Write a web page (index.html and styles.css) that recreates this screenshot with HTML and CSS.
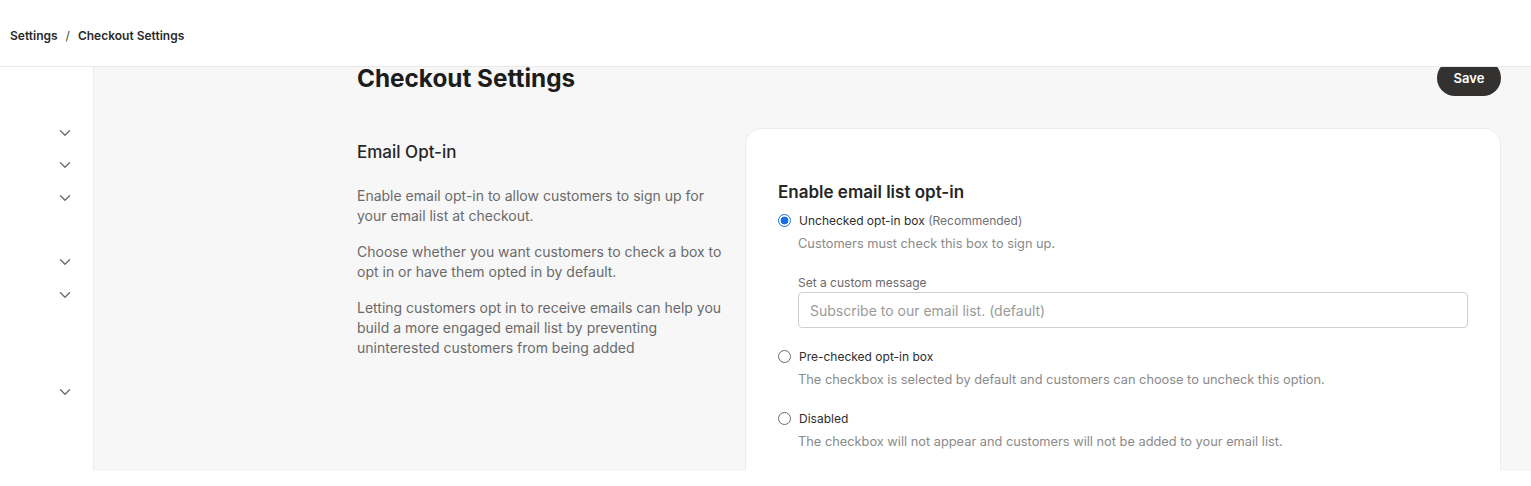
FILE: index.html
```html
<!DOCTYPE html>
<html lang="en">
<head>
<meta charset="utf-8">
<title>Checkout Settings</title>
<link rel="stylesheet" href="styles.css">
</head>
<body>
<div class="app">
  <header class="topbar">
    <nav class="crumbs">
      <span class="crumb">Settings</span>
      <span class="crumb-sep">/</span>
      <span class="crumb">Checkout Settings</span>
    </nav>
  </header>
  <div class="body">
    <aside class="sidebar">
      <ul class="side-list">
        <li class="side-item"><svg class="chev" viewBox="0 0 12 8"><path d="M1.5 1.8 6 6.2 10.5 1.8"/></svg></li>
        <li class="side-item"><svg class="chev" viewBox="0 0 12 8"><path d="M1.5 1.8 6 6.2 10.5 1.8"/></svg></li>
        <li class="side-item"><svg class="chev" viewBox="0 0 12 8"><path d="M1.5 1.8 6 6.2 10.5 1.8"/></svg></li>
        <li class="side-item"></li>
        <li class="side-item"><svg class="chev" viewBox="0 0 12 8"><path d="M1.5 1.8 6 6.2 10.5 1.8"/></svg></li>
        <li class="side-item"><svg class="chev" viewBox="0 0 12 8"><path d="M1.5 1.8 6 6.2 10.5 1.8"/></svg></li>
        <li class="side-item"></li>
        <li class="side-item"></li>
        <li class="side-item"><svg class="chev" viewBox="0 0 12 8"><path d="M1.5 1.8 6 6.2 10.5 1.8"/></svg></li>
      </ul>
    </aside>
    <main class="main">
      <div class="content">
        <div class="page-head">
          <h1 class="page-title">Checkout Settings</h1>
          <button class="save-btn" type="button">Save</button>
        </div>
        <div class="section">
          <div class="section-info">
            <h2 class="section-title">Email Opt-in</h2>
            <p class="section-text">Enable email opt-in to allow customers to sign up for your email list at checkout.</p>
            <p class="section-text">Choose whether you want customers to check a box to opt in or have them opted in by default.</p>
            <p class="section-text">Letting customers opt in to receive emails can help you build a more engaged email list by preventing uninterested customers from being added</p>
          </div>
          <div class="card">
            <h3 class="card-title">Enable email list opt-in</h3>
            <div class="option">
              <div class="option-row">
                <span class="radio radio-checked"></span>
                <span class="option-label">Unchecked opt-in box <span class="option-note">(Recommended)</span></span>
              </div>
              <p class="option-desc">Customers must check this box to sign up.</p>
              <div class="field">
                <label class="field-label">Set a custom message</label>
                <div class="field-input">Subscribe to our email list. (default)</div>
              </div>
            </div>
            <div class="option">
              <div class="option-row">
                <span class="radio"></span>
                <span class="option-label">Pre-checked opt-in box</span>
              </div>
              <p class="option-desc">The checkbox is selected by default and customers can choose to uncheck this option.</p>
            </div>
            <div class="option">
              <div class="option-row">
                <span class="radio"></span>
                <span class="option-label">Disabled</span>
              </div>
              <p class="option-desc">The checkbox will not appear and customers will not be added to your email list.</p>
            </div>
          </div>
        </div>
      </div>
    </main>
  </div>
</div>
</body>
</html>
```

FILE: styles.css
```css
* { box-sizing: border-box; }
html, body { margin: 0; padding: 0; background: #fff; }
body {
  font-family: Inter, "Noto Sans", "Liberation Sans", sans-serif;
  color: #222;
}
.app {
  height: 471px;
  display: flex;
  flex-direction: column;
  overflow: hidden;
}
.topbar {
  height: 67px;
  flex: none;
  display: flex;
  align-items: center;
  padding-left: 10px;
  border-bottom: 1px solid #e9e9e9;
  background: #fff;
  position: relative;
  z-index: 2;
}
.crumbs {
  display: flex;
  align-items: center;
  gap: 8px;
  font-size: 12px;
  font-weight: 600;
  color: #2a2a2a;
  padding-top: 5px;
}
.crumb-sep { font-weight: 400; color: #444; }
.body {
  flex: 1;
  display: flex;
  min-height: 0;
}
.sidebar {
  width: 94px;
  flex: none;
  background: #fff;
  border-right: 1px solid #ececec;
}
.side-list {
  list-style: none;
  margin: 0;
  padding: 50px 0 0 0;
}
.side-item {
  height: 32.3px;
  display: flex;
  align-items: center;
  justify-content: flex-end;
  padding-right: 22px;
}
.chev {
  width: 12px;
  height: 8px;
  fill: none;
  stroke: #6f6f6f;
  stroke-width: 1.4;
  stroke-linecap: round;
  stroke-linejoin: round;
}
.main {
  flex: 1;
  background: #f7f7f7;
}
.content {
  margin-top: -7px;
  padding: 0 30px 0 263px;
}
.page-head {
  height: 36px;
  display: flex;
  align-items: center;
  justify-content: space-between;
}
.page-title {
  margin: 0;
  padding-top: 1px;
  font-size: 24.3px;
  line-height: 29px;
  font-weight: 700;
  color: #1c1c1c;
}
.save-btn {
  height: 36px;
  width: 64px;
  border: none;
  border-radius: 18px;
  background: #333230;
  color: #fff;
  font-family: inherit;
  font-size: 13px;
  font-weight: 600;
  padding: 0;
}
.section {
  margin-top: 32px;
  display: grid;
  grid-template-columns: 366px 1fr;
  gap: 22px;
}
.section-info { padding-top: 12px; }
.section-title {
  margin: 0 0 22px 0;
  font-size: 17px;
  line-height: 24px;
  font-weight: 500;
  color: #262626;
}
.section-text {
  margin: 0 0 16px 0;
  font-size: 14px;
  line-height: 20px;
  color: #6a6a6a;
}
.card {
  background: #fff;
  border: 1px solid #ededed;
  border-radius: 16px;
  padding: 51px 32px 40px 32px;
  min-height: 400px;
}
.card-title {
  margin: 0 0 6px 0;
  font-size: 17px;
  line-height: 24px;
  font-weight: 600;
  color: #262626;
}
.option + .option { margin-top: 18px; }
.option-row {
  display: flex;
  align-items: center;
  gap: 8px;
  height: 20px;
}
.radio {
  width: 13px;
  height: 13px;
  border-radius: 50%;
  border: 1px solid #6a6a6a;
  background: #fff;
  flex: none;
}
.radio-checked {
  border: 1.5px solid #1a6fe0;
  background: radial-gradient(circle, #1a6fe0 0 3.6px, #fff 4.2px);
}
.option-label {
  font-size: 12px;
  color: #2e2e2e;
}
.option-note { color: #6f6f6f; }
.option-desc {
  margin: 4px 0 0 20px;
  font-size: 12.8px;
  line-height: 20px;
  color: #8a8a8a;
}
.field {
  margin: 20px 0 0 20px;
}
.field-label {
  display: block;
  font-size: 12px;
  line-height: 18px;
  color: #6a6a6a;
  margin-bottom: 0;
}
.field-input {
  height: 36px;
  border: 1px solid #cfcfcf;
  border-radius: 4px;
  padding: 0 11px;
  display: flex;
  align-items: center;
  font-size: 14px;
  color: #9a9a9a;
}
```
